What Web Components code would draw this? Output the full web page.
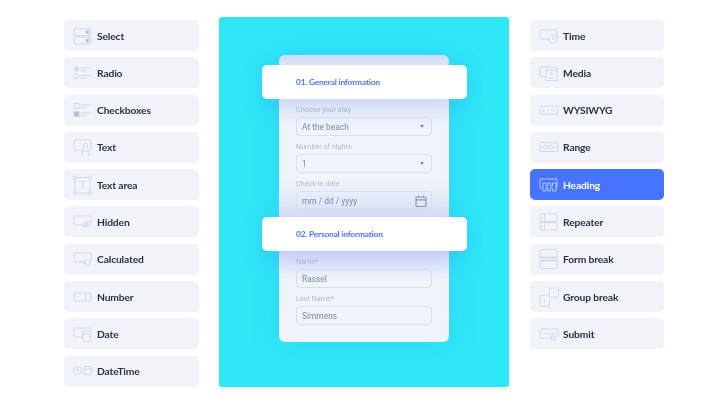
<!DOCTYPE html>
<html>
<head>
<meta charset="utf-8">
<title>Form builder</title>
<style>
  html, body { margin: 0; padding: 0; background: #fff; }
</style>
</head>
<body>
<demo-page>
  <chip-column slot="left">
    <field-chip icon="select">Select</field-chip>
    <field-chip icon="radio">Radio</field-chip>
    <field-chip icon="checkboxes">Checkboxes</field-chip>
    <field-chip icon="text">Text</field-chip>
    <field-chip icon="textarea">Text area</field-chip>
    <field-chip icon="hidden">Hidden</field-chip>
    <field-chip icon="calculated">Calculated</field-chip>
    <field-chip icon="number">Number</field-chip>
    <field-chip icon="date">Date</field-chip>
    <field-chip icon="datetime">DateTime</field-chip>
  </chip-column>
  <form-preview slot="center">
    <form-banner>01. General information</form-banner>
    <form-field label="Choose your stay" value="At the beach" kind="select"></form-field>
    <form-field label="Number of nights" value="1" kind="select"></form-field>
    <form-field label="Check-in date" value="mm / dd / yyyy" kind="date"></form-field>
    <form-banner second>02. Personal information</form-banner>
    <form-field label="Name*" value="Rassel"></form-field>
    <form-field label="Last Name*" value="Simmens"></form-field>
  </form-preview>
  <chip-column slot="right">
    <field-chip icon="time">Time</field-chip>
    <field-chip icon="media">Media</field-chip>
    <field-chip icon="wysiwyg">WYSIWYG</field-chip>
    <field-chip icon="range">Range</field-chip>
    <field-chip icon="heading" active>Heading</field-chip>
    <field-chip icon="repeater">Repeater</field-chip>
    <field-chip icon="formbreak">Form break</field-chip>
    <field-chip icon="groupbreak">Group break</field-chip>
    <field-chip icon="submit">Submit</field-chip>
  </chip-column>
</demo-page>

<script>
// icon strokes, 20x20 box, colours come from the chip
const ICONS = {
  select: `<rect x="1" y="2.5" width="17" height="7" rx="1"/><rect x="1" y="11" width="17" height="7" rx="1"/>
    <rect class="f" x="13" y="4.5" width="3" height="3"/><rect class="f" x="13" y="13" width="3" height="3"/>`,
  radio: `<circle cx="3.5" cy="6" r="2.4"/><circle class="f" cx="3.5" cy="6" r="1"/><circle cx="3.5" cy="13.5" r="2.4"/>
    <path d="M7 5h11M7 7.500h6M7 12.500h11M7 15h6"/>`,
  checkboxes: `<rect x="1" y="3.500" width="5" height="5"/><rect class="f" x="1" y="11.500" width="5" height="5"/>
    <path d="M7.500 5h10M7.500 7.500h6M7.500 13h10M7.500 15.500h6"/>`,
  text: `<path d="M9 13.500H2a1 1 0 0 1-1-1V4a1 1 0 0 1 1-1h15a1 1 0 0 1 1 1v8.500a1 1 0 0 1-1 1"/>
    <path d="M8.500 18l3-11.500h2L16.500 18M10 14h5M8 18h2.500M14.500 18H17"/>`,
  textarea: `<path d="M3.500 2.500h12M2 4v12.500M17 4v12.500M3.500 18h12"/>
    <circle cx="2" cy="2.500" r="1.500"/><circle cx="17" cy="2.500" r="1.500"/><circle cx="2" cy="18" r="1.500"/><circle cx="17" cy="18" r="1.500"/>
    <path d="M6 6.500h7.500M9.700 6.500v8.500"/>`,
  hidden: `<path d="M10 13H2a1 1 0 0 1-1-1V5a1 1 0 0 1 1-1h15a1 1 0 0 1 1 1v7a1 1 0 0 1-1 1"/>
    <ellipse cx="13" cy="12.500" rx="3.500" ry="2.300"/><circle cx="13" cy="12.500" r="1"/><path d="M10.500 15.500l5-6"/>`,
  calculated: `<path d="M10 13H2a1 1 0 0 1-1-1V5a1 1 0 0 1 1-1h15a1 1 0 0 1 1 1v7a1 1 0 0 1-1 1"/>
    <circle cx="14.500" cy="13.500" r="3"/><path d="M9 13.500h4M11 11.500v4"/>`,
  number: `<rect x="1" y="6" width="17" height="8" rx=".5"/><path d="M12.500 6v8M15 8.200v1M15 11v1M4.500 9v2"/>`,
  date: `<path d="M9 13H2a1 1 0 0 1-1-1V5a1 1 0 0 1 1-1h15a1 1 0 0 1 1 1v2"/>
    <rect x="9.500" y="7" width="8" height="10.500" rx="1"/><path d="M9.500 10h8"/>`,
  datetime: `<circle cx="4.500" cy="9.500" r="4"/><path d="M4.500 7v2.800h2"/><rect x="11" y="5.500" width="8" height="8" rx="1"/><path d="M11 8h8"/>`,
  time: `<path d="M9 13H2a1 1 0 0 1-1-1V5a1 1 0 0 1 1-1h15a1 1 0 0 1 1 1v6"/>
    <circle cx="14" cy="13" r="4.300"/><path d="M14 10.500v2.800h2"/>`,
  media: `<path d="M7 13.500H2a1 1 0 0 1-1-1V5a1 1 0 0 1 1-1h15a1 1 0 0 1 1 1v2"/>
    <rect x="7" y="7" width="11" height="10.500"/><circle cx="12.500" cy="10.500" r="1"/><path d="M10 15h5"/>`,
  wysiwyg: `<rect x="1" y="6" width="18" height="8" rx=".5"/><path d="M4 8.500v3h2M8.500 8.500l1.500 3M13 8.500v3M15.500 8.500v3"/>`,
  range: `<rect x="1" y="5.500" width="18" height="9" rx=".5"/><circle cx="6.500" cy="10" r="2"/><circle cx="12.500" cy="10" r="2"/><path d="M1 10h3.500M8.500 10h2M14.500 10H19"/>`,
  heading: `<path d="M3 13H2a1 1 0 0 1-1-1V5a1 1 0 0 1 1-1h15a1 1 0 0 1 1 1v7a1 1 0 0 1-1 1"/>
    <path d="M4 8h3v3h2V8h2.500v3h2V8H17v8h-3.500v-3h-2v3H9v-3H7v3H4z"/>`,
  repeater: `<rect x="1" y="2" width="17" height="7.500" rx="1"/><rect x="1" y="10.500" width="17" height="7.500" rx="1"/><path d="M5.500 2v7.500M5.500 10.500V18M3.300 5v2M3.300 13.500v2"/>`,
  formbreak: `<path d="M1 8V2a1.500 1.500 0 0 1 1.500-1.500h14A1.500 1.500 0 0 1 18 2v6M1 12v6a1.500 1.500 0 0 0 1.500 1.500h14a1.500 1.500 0 0 0 1.500-1.500v-6"/><path d="M.5 8.500h18M.5 11.500h18" stroke-width="1.400"/>`,
  groupbreak: `<rect x="1" y="8.500" width="9.500" height="10.500" rx="1"/><path d="M10.500 8V2a1 1 0 0 1 1-1h7a1 1 0 0 1 1 1v7a1 1 0 0 1-1 1h-8"/><path d="M5.500 12v3.500M15 4v2.500"/>`,
  submit: `<path d="M12 14H2a1 1 0 0 1-1-1V6a1 1 0 0 1 1-1h16a1 1 0 0 1 1 1v7a1 1 0 0 1-1 1"/><path d="M4 9.500h12" stroke-dasharray="1.500 .6"/><rect x="12" y="12" width="4" height="4"/>`
};

class DemoPage extends HTMLElement {
  constructor() {
    super();
    this.attachShadow({ mode: 'open' });
    this.shadowRoot.innerHTML = `
      <style>
        :host {
          display: grid;
          grid-template-columns: 135px 290px 135px;
          column-gap: 20px;
          width: 728px;
          height: 404px;
          box-sizing: border-box;
          padding: 17px 0 0 64px;
          overflow: hidden;
          background: #fff;
          filter: blur(.35px);
        }
        .stage {
          display: flex;
          justify-content: center;
          height: 370px;
          box-sizing: border-box;
          padding-top: 38px;
          border-radius: 3px;
          background: #2ee8f6;
        }
        .side { display: block; padding-top: 3px; }
        .right { margin-left: 1px; }
      </style>
      <div class="side"><slot name="left"></slot></div>
      <div class="stage"><slot name="center"></slot></div>
      <div class="side right"><slot name="right"></slot></div>
    `;
  }
}

class ChipColumn extends HTMLElement {
  constructor() {
    super();
    this.attachShadow({ mode: 'open' });
    this.shadowRoot.innerHTML = `
      <style>
        :host { display: flex; flex-direction: column; gap: 6.3px; }
      </style>
      <slot></slot>
    `;
  }
}

class FieldChip extends HTMLElement {
  constructor() {
    super();
    this.attachShadow({ mode: 'open' });
    this.shadowRoot.innerHTML = `
      <style>
        :host {
          display: flex;
          align-items: center;
          gap: 4px;
          height: 31px;
          box-sizing: border-box;
          padding-left: 9px;
          border-radius: 5px;
          background: #f0f3f8;
          color: #2b3146;
          font: 700 10.3px Lato, sans-serif;
          letter-spacing: -.15px;
          --line: #c9d3e3;
          --fill: #b4c1d7;
        }
        :host([active]) {
          background: #4673ff;
          color: #fff;
          --line: #cfdcff;
          --fill: #cfdcff;
        }
        svg { width: 20px; height: 20px; flex: none; overflow: visible; fill: none; stroke: var(--line); stroke-width: .8; }
        svg .f { fill: var(--fill); }
      </style>
      <svg viewBox="0 0 20 20"></svg>
      <slot></slot>
    `;
  }
  connectedCallback() {
    this.shadowRoot.querySelector('svg').innerHTML = ICONS[this.getAttribute('icon')] || '';
  }
}

class FormPreview extends HTMLElement {
  constructor() {
    super();
    this.attachShadow({ mode: 'open' });
    this.shadowRoot.innerHTML = `
      <style>
        :host {
          display: block;
          width: 170px;
          height: 287px;
          box-sizing: border-box;
          padding: 10px 17px 0;
          border-radius: 6px;
          background: linear-gradient(#d6dff6 0, #e4eaf8 10px, #eff3fa 75px, #eff3fa 125px, #d9e2f7 162px, #d9e2f7 196px, #eff3fa 225px);
          box-shadow: 0 0 30px rgba(60, 130, 255, .18);
        }
      </style>
      <slot></slot>
    `;
  }
}

class FormBanner extends HTMLElement {
  constructor() {
    super();
    this.attachShadow({ mode: 'open' });
    this.shadowRoot.innerHTML = `
      <style>
        :host {
          display: flex;
          align-items: center;
          height: 34px;
          box-sizing: border-box;
          margin: 0 -35px 0 -34px;
          padding-left: 34px;
          border-radius: 5px;
          background: #fff;
          color: #4a74ff;
          font: 700 8.4px Lato, sans-serif;
          letter-spacing: -.2px;
          box-shadow: 0 6px 22px rgba(70, 100, 255, .22);
          position: relative;
        }
        :host([second]) { margin-top: 7px; }
      </style>
      <slot></slot>
    `;
  }
}

class FormField extends HTMLElement {
  constructor() {
    super();
    this.attachShadow({ mode: 'open' });
    this.shadowRoot.innerHTML = `
      <style>
        :host { display: block; font-family: Roboto, sans-serif; }
        .label {
          height: 18px;
          box-sizing: border-box;
          padding-top: 4px;
          line-height: 14px;
          font-size: 7.2px;
          color: #b1b9cc;
        }
        .box {
          display: flex;
          align-items: center;
          justify-content: space-between;
          height: 19px;
          box-sizing: border-box;
          padding: 0 4px 0 5px;
          border: 1px solid #d9dfec;
          border-radius: 4px;
          font-size: 8.4px;
          color: #7f899f;
        }
        .caret { width: 0; height: 0; margin-right: 3px; border: 2.5px solid transparent; border-top: 3px solid #7f899f; border-bottom: 0; }
        svg { width: 12px; height: 12px; fill: none; stroke: #8d97ad; stroke-width: 1.2; }
      </style>
      <div class="label"></div>
      <div class="box"><span class="value"></span><span class="end"></span></div>
    `;
  }
  connectedCallback() {
    const root = this.shadowRoot;
    root.querySelector('.label').textContent = this.getAttribute('label');
    root.querySelector('.value').textContent = this.getAttribute('value');
    const kind = this.getAttribute('kind');
    const end = root.querySelector('.end');
    if (kind === 'select') {
      end.className = 'caret';
    } else if (kind === 'date') {
      end.innerHTML = '<svg viewBox="0 0 12 12"><rect x="1" y="2" width="10" height="9.500" rx="1"/><path d="M1 4.800h10M3.500 .5v2M8.500 .5v2" /></svg>';
      end.style.display = 'flex';
    }
  }
}

customElements.define('demo-page', DemoPage);
customElements.define('chip-column', ChipColumn);
customElements.define('field-chip', FieldChip);
customElements.define('form-preview', FormPreview);
customElements.define('form-banner', FormBanner);
customElements.define('form-field', FormField);
</script>
</body>
</html>
